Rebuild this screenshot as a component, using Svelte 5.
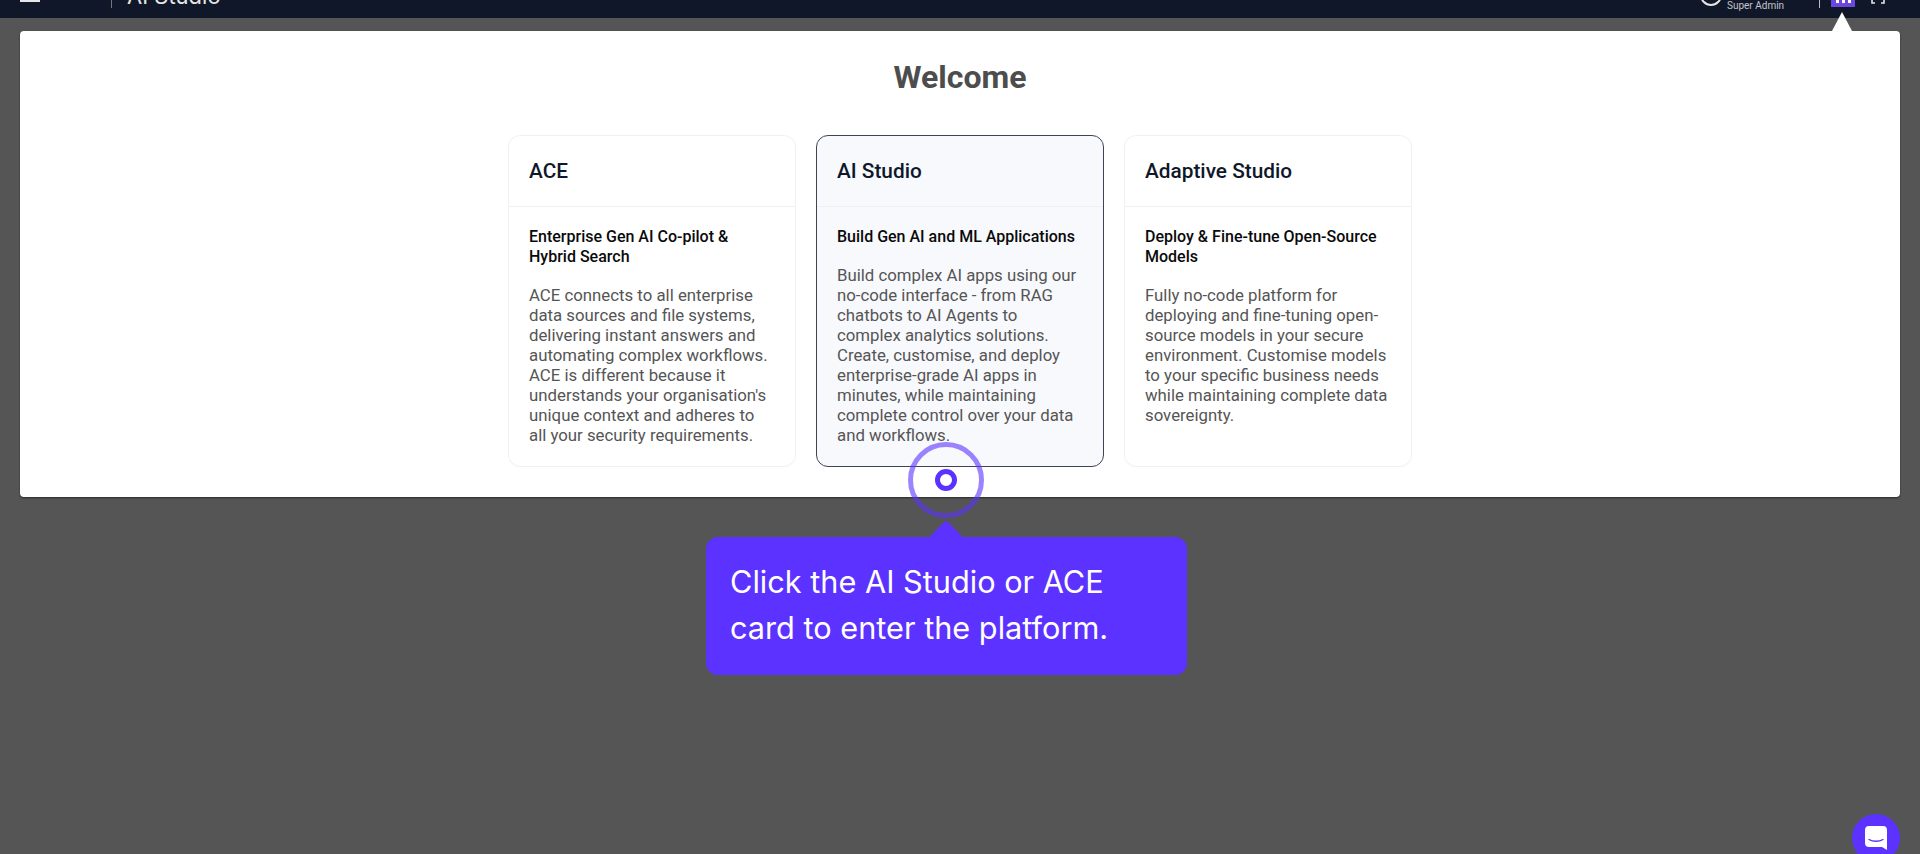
<script>
  const cards = [
    {
      name: 'ACE',
      subtitle: 'Enterprise Gen AI Co-pilot & Hybrid Search',
      text: "ACE connects to all enterprise data sources and file systems, delivering instant answers and automating complex workflows. ACE is different because it understands your organisation's unique context and adheres to all your security requirements."
    },
    {
      name: 'AI Studio',
      subtitle: 'Build Gen AI and ML Applications',
      text: 'Build complex AI apps using our no-code interface - from RAG chatbots to AI Agents to complex analytics solutions. Create, customise, and deploy enterprise-grade AI apps in minutes, while maintaining complete control over your data and workflows.',
      active: true
    },
    {
      name: 'Adaptive Studio',
      subtitle: 'Deploy & Fine-tune Open-Source Models',
      text: 'Fully no-code platform for deploying and fine-tuning open-source models in your secure environment. Customise models to your specific business needs while maintaining complete data sovereignty.'
    }
  ];
</script>

<div class="page">
  <header class="topbar">
    <div class="bar-inner">
      <div class="bar-left">
        <div class="burger"><span></span><span></span><span></span></div>
        <div class="sep"></div>
        <div class="app-name">AI Studio</div>
      </div>
      <div class="bar-right">
        <div class="avatar"></div>
        <div class="user-role">Super Admin</div>
        <div class="sep small"></div>
        <div class="apps"><i></i><i></i><i></i></div>
        <svg class="expand" width="14" height="22" viewBox="0 0 14 22" fill="none" stroke="#e6e6e6" stroke-width="1.6">
          <path d="M1 14v4h3M13 14v4h-3" />
        </svg>
      </div>
    </div>
  </header>

  <main class="panel">
    <h1>Welcome</h1>
    <div class="cards">
      {#each cards as card}
        <section class="card" class:active={card.active}>
          <h2>{card.name}</h2>
          <div class="card-body">
            <h3>{card.subtitle}</h3>
            <p>{card.text}</p>
          </div>
        </section>
      {/each}
    </div>
  </main>

  <div class="pointer"></div>

  <div class="beacon"><div class="dot"></div></div>

  <div class="tip">
    <div class="tip-arrow"></div>
    <div class="tip-text">Click the AI Studio or ACE card to enter the platform.</div>
  </div>

  <button class="chat" aria-label="Chat">
    <svg width="22" height="24" viewBox="0 0 22 24">
      <path d="M4 0h14a4 4 0 0 1 4 4v20l-5-3H4a4 4 0 0 1-4-4V4a4 4 0 0 1 4-4z" fill="#fff" />
      <path d="M4 13.5c4 2.4 10 2.4 14 0" fill="none" stroke="#5b32ff" stroke-width="1.4" stroke-linecap="round" />
    </svg>
  </button>
</div>

<style>
  :global(body) {
    margin: 0;
    background: #555;
  }

  .page {
    position: relative;
    height: 854px;
    overflow: hidden;
    background: #555;
    font-family: Roboto, sans-serif;
  }

  .topbar {
    height: 18px;
    background: #101729;
    overflow: hidden;
  }

  .bar-inner {
    display: flex;
    align-items: center;
    justify-content: space-between;
    height: 44px;
    margin-top: -26px;
    padding: 0 35px 0 20px;
    color: #e6e6e6;
  }

  .bar-left,
  .bar-right {
    display: flex;
    align-items: center;
  }

  .burger {
    display: flex;
    flex-direction: column;
    gap: 5px;
    width: 20px;
    margin-bottom: 4px;
  }

  .burger span {
    height: 2px;
    background: #e6e6e6;
  }

  .sep {
    width: 1px;
    height: 24px;
    margin: 0 15px 0 71px;
    background: #777;
  }

  .sep.small {
    margin: 0 11px 0 36px;
    background: #bbb;
  }

  .app-name {
    font-family: Inter, sans-serif;
    font-size: 22px;
    line-height: 44px;
  }

  .avatar {
    width: 22px;
    height: 22px;
    box-sizing: border-box;
    margin: 0 5px 3px 0;
    border: 2px solid #e6e6e6;
    border-radius: 50%;
  }

  .user-role {
    width: 56px;
    padding-top: 20px;
    font-size: 10px;
    line-height: 14px;
    color: #c4c4cc;
    white-space: nowrap;
  }

  .apps {
    display: flex;
    align-items: flex-end;
    justify-content: center;
    gap: 3px;
    width: 24px;
    height: 22px;
    padding-bottom: 4px;
    box-sizing: border-box;
    margin-right: 16px;
    background: #6a48e0;
  }

  .apps i {
    width: 3px;
    height: 3px;
    background: #fff;
  }

  .expand {
    display: block;
  }

  .panel {
    margin: 13px 20px 0;
    height: 466px;
    box-sizing: border-box;
    padding-top: 28px;
    background: #fff;
    border-radius: 4px;
    box-shadow: 0 1px 2px rgba(0, 0, 0, 0.5);
  }

  h1 {
    margin: 0 0 39px;
    text-align: center;
    font-size: 32px;
    line-height: 37px;
    font-weight: 700;
    color: #4d4d4d;
  }

  .cards {
    display: flex;
    justify-content: center;
    gap: 20px;
  }

  .card {
    width: 288px;
    height: 332px;
    box-sizing: border-box;
    border: 1px solid #f0f0f2;
    border-radius: 12px;
    background: #fff;
  }

  .card.active {
    border-color: #3f4454;
    background: #f8f9fd;
  }

  h2 {
    margin: 0;
    height: 71px;
    box-sizing: border-box;
    padding: 0 20px;
    border-bottom: 1px solid #f0f0f2;
    font-size: 20.8px;
    line-height: 70px;
    font-weight: 500;
    color: #0f172a;
  }

  .card-body {
    padding: 20px 20px 0;
  }

  h3 {
    margin: 0 0 18px;
    font-size: 16px;
    line-height: 20px;
    font-weight: 500;
    color: #0a0a0a;
  }

  p {
    margin: 0;
    font-size: 16.8px;
    line-height: 20px;
    color: #555;
  }

  .pointer {
    position: absolute;
    left: 1832px;
    top: 12px;
    width: 20px;
    height: 19px;
    background: #fff;
    clip-path: polygon(50% 0, 100% 100%, 0 100%);
  }

  .beacon {
    position: absolute;
    left: 908px;
    top: 442px;
    display: flex;
    align-items: center;
    justify-content: center;
    width: 76px;
    height: 76px;
    box-sizing: border-box;
    border: 5px solid rgba(91, 50, 255, 0.6);
    border-radius: 50%;
  }

  .dot {
    width: 22px;
    height: 22px;
    box-sizing: border-box;
    border: 5px solid #5b32ff;
    border-radius: 50%;
    background: #fff;
  }

  .tip {
    position: absolute;
    left: 706px;
    top: 537px;
    width: 481px;
    height: 138px;
    box-sizing: border-box;
    padding: 22px 24px;
    background: #5b32ff;
    border-radius: 12px;
  }

  .tip-arrow {
    position: absolute;
    left: 228px;
    top: -12px;
    width: 24px;
    height: 24px;
    background: #5b32ff;
    border-radius: 3px;
    transform: rotate(45deg);
  }

  .tip-text {
    position: relative;
    font-family: Inter, sans-serif;
    font-size: 30.7px;
    line-height: 46px;
    color: #fff;
  }

  .chat {
    position: absolute;
    left: 1852px;
    top: 814px;
    display: flex;
    align-items: center;
    justify-content: center;
    width: 48px;
    height: 48px;
    padding: 0;
    border: none;
    border-radius: 50%;
    background: #5b32ff;
  }
</style>
